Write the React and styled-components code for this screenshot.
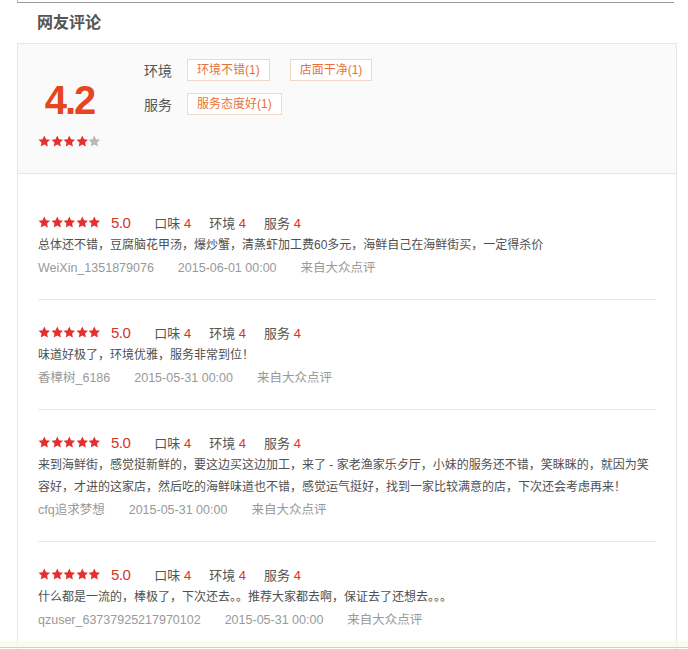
import React from 'react';
import styled, { createGlobalStyle } from 'styled-components';

const GlobalStyle = createGlobalStyle`
  html, body {
    margin: 0;
    padding: 0;
    background: #fff;
    overflow: hidden;
  }
  body {
    font-family: "Liberation Sans", "Noto Sans CJK SC", sans-serif;
    color: #555;
  }
`;

const Page = styled.div`
  width: 688px;
  height: 649px;
  overflow: hidden;
`;

const TopRule = styled.div`
  margin-left: 17px;
  width: 656px;
  height: 2px;
  border-left: 1px solid #b5b5b5;
  border-bottom: 1px solid #9a9a9a;
`;

const Title = styled.h2`
  margin: 0;
  padding-left: 37px;
  height: 40px;
  line-height: 40px;
  font-size: 16px;
  font-weight: bold;
  color: #555;
`;

const Card = styled.div`
  margin-left: 17px;
  width: 660px;
  box-sizing: border-box;
  border: 1px solid #e6e6e6;
  border-bottom: none;
`;

const Summary = styled.div`
  display: flex;
  align-items: flex-start;
  gap: 43px;
  height: 130px;
  box-sizing: border-box;
  padding: 15px 0 0 20px;
  background: #fafafa;
  border-bottom: 1px solid #e6e6e6;
`;

const ScoreBox = styled.div`
  width: 63px;
  margin-top: 21px;
  display: flex;
  flex-direction: column;
  align-items: center;
  gap: 15px;
`;

const BigScore = styled.div`
  font-size: 40px;
  line-height: 40px;
  font-weight: bold;
  letter-spacing: -2px;
  color: #e6461e;
`;

const Stars = styled.span`
  display: inline-flex;
  svg {
    width: 12.6px;
    height: 12.6px;
    display: block;
  }
`;

const TagRows = styled.div`
  display: flex;
  flex-direction: column;
  gap: 12px;
`;

const TagRow = styled.div`
  display: flex;
  align-items: center;
`;

const TagLabel = styled.span`
  width: 43px;
  font-size: 14px;
  color: #555;
`;

const Tags = styled.div`
  display: flex;
  gap: 20px;
`;

const Tag = styled.span`
  height: 22px;
  box-sizing: border-box;
  padding: 0 9px;
  line-height: 20px;
  font-size: 12px;
  color: #e8733a;
  background: #fff;
  border: 1px solid #f4d6c4;
`;

const ReviewList = styled.div`
  padding: 16px 20px 0;
`;

const Review = styled.div`
  padding: 21px 0 20px;
  border-bottom: 1px solid #e8e8e8;
`;

const ScoreRow = styled.div`
  display: flex;
  align-items: center;
  height: 22px;
  margin-bottom: 1px;
`;

const Rating = styled.span`
  margin: 0 24px 0 10px;
  font-size: 15px;
  letter-spacing: -0.5px;
  color: #d9322b;
`;

const Aspect = styled.span`
  margin-right: 18px;
  font-size: 13px;
  color: #555;
  b {
    font-weight: normal;
    color: #d9322b;
  }
`;

const Content = styled.p`
  margin: 0;
  font-size: 12px;
  line-height: 22px;
  color: #505050;
`;

const Meta = styled.div`
  display: flex;
  gap: 24px;
  margin-top: 1px;
  font-size: 12.5px;
  line-height: 22px;
  color: #999;
`;

const BottomBar = styled.div`
  position: fixed;
  left: 0;
  right: 0;
  bottom: 1px;
  height: 6px;
  background: rgba(250, 248, 232, 0.7);
  border-bottom: 1px solid #cfcfcf;
`;

const StarIcon = ({ color }) => (
  <svg viewBox="0 0 24 24">
    <polygon
      fill={color}
      points="12,1 15.29,7.97 22.94,8.95 17.33,14.23 18.76,21.8 12,18.1 5.24,21.8 6.67,14.23 1.06,8.95 8.71,7.97"
    />
  </svg>
);

const StarRow = ({ value }) => (
  <Stars>
    {[1, 2, 3, 4, 5].map(i => (
      <StarIcon key={i} color={i <= value ? '#e3302f' : '#b8b8b8'} />
    ))}
  </Stars>
);

const reviews = [
  {
    user: 'WeiXin_1351879076',
    date: '2015-06-01 00:00',
    text: '总体还不错，豆腐脑花甲汤，爆炒蟹，清蒸虾加工费60多元，海鲜自己在海鲜街买，一定得杀价',
  },
  {
    user: '香樟树_6186',
    date: '2015-05-31 00:00',
    text: '味道好极了，环境优雅，服务非常到位！',
  },
  {
    user: 'cfq追求梦想',
    date: '2015-05-31 00:00',
    text: '来到海鲜街，感觉挺新鲜的，要这边买这边加工，来了 - 家老渔家乐歺厅，小妹的服务还不错，笑眯眯的，就因为笑容好，才进的这家店，然后吃的海鲜味道也不错，感觉运气挺好，找到一家比较满意的店，下次还会考虑再来！',
  },
  {
    user: 'qzuser_63737925217970102',
    date: '2015-05-31 00:00',
    text: '什么都是一流的，棒极了，下次还去。。推荐大家都去啊，保证去了还想去。。。',
  },
];

export default function App() {
  return (
    <Page>
      <GlobalStyle />
      <TopRule />
      <Title>网友评论</Title>
      <Card>
        <Summary>
          <ScoreBox>
            <BigScore>4.2</BigScore>
            <StarRow value={4} />
          </ScoreBox>
          <TagRows>
            <TagRow>
              <TagLabel>环境</TagLabel>
              <Tags>
                <Tag>环境不错(1)</Tag>
                <Tag>店面干净(1)</Tag>
              </Tags>
            </TagRow>
            <TagRow>
              <TagLabel>服务</TagLabel>
              <Tags>
                <Tag>服务态度好(1)</Tag>
              </Tags>
            </TagRow>
          </TagRows>
        </Summary>
        <ReviewList>
          {reviews.map(r => (
            <Review key={r.user}>
              <ScoreRow>
                <StarRow value={5} />
                <Rating>5.0</Rating>
                <Aspect>口味 <b>4</b></Aspect>
                <Aspect>环境 <b>4</b></Aspect>
                <Aspect>服务 <b>4</b></Aspect>
              </ScoreRow>
              <Content>{r.text}</Content>
              <Meta>
                <span>{r.user}</span>
                <span>{r.date}</span>
                <span>来自大众点评</span>
              </Meta>
            </Review>
          ))}
        </ReviewList>
      </Card>
      <BottomBar />
    </Page>
  );
}
